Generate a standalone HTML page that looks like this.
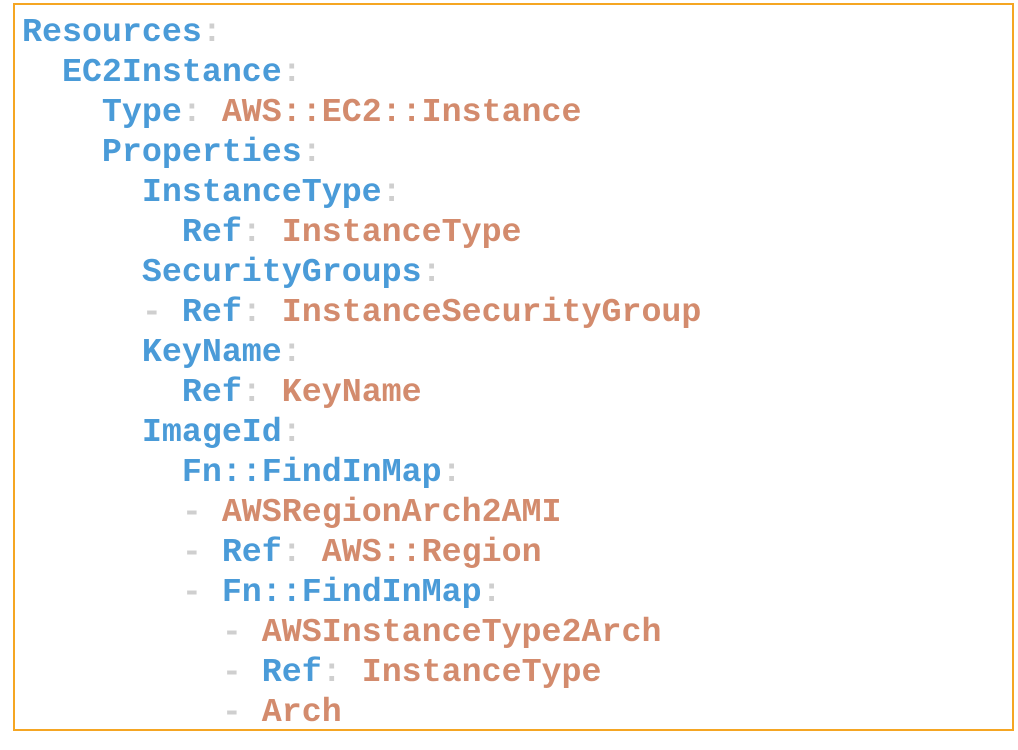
<!DOCTYPE html>
<html><head><style>
body{margin:0;width:1018px;height:750px;background:#fff;overflow:hidden}
.box{position:absolute;left:13px;top:3px;width:1001px;height:728px;border:2px solid #f5a623;box-sizing:border-box}
pre{position:absolute;left:22px;top:12px;margin:0;font-family:"Liberation Mono",monospace;font-size:33.3px;line-height:40px;font-weight:bold;color:#4a9bd8}
.s{color:#d38b6d}.c{color:#cfcfcf}
</style></head><body><div class="box"></div>
<pre>Resources<span class="c">:</span>
  EC2Instance<span class="c">:</span>
    Type<span class="c">:</span> <span class="s">AWS::EC2::Instance</span>
    Properties<span class="c">:</span>
      InstanceType<span class="c">:</span>
        Ref<span class="c">:</span> <span class="s">InstanceType</span>
      SecurityGroups<span class="c">:</span>
      <span class="c">-</span> Ref<span class="c">:</span> <span class="s">InstanceSecurityGroup</span>
      KeyName<span class="c">:</span>
        Ref<span class="c">:</span> <span class="s">KeyName</span>
      ImageId<span class="c">:</span>
        Fn::FindInMap<span class="c">:</span>
        <span class="c">-</span> <span class="s">AWSRegionArch2AMI</span>
        <span class="c">-</span> Ref<span class="c">:</span> <span class="s">AWS::Region</span>
        <span class="c">-</span> Fn::FindInMap<span class="c">:</span>
          <span class="c">-</span> <span class="s">AWSInstanceType2Arch</span>
          <span class="c">-</span> Ref<span class="c">:</span> <span class="s">InstanceType</span>
          <span class="c">-</span> <span class="s">Arch</span></pre>
</body></html>
